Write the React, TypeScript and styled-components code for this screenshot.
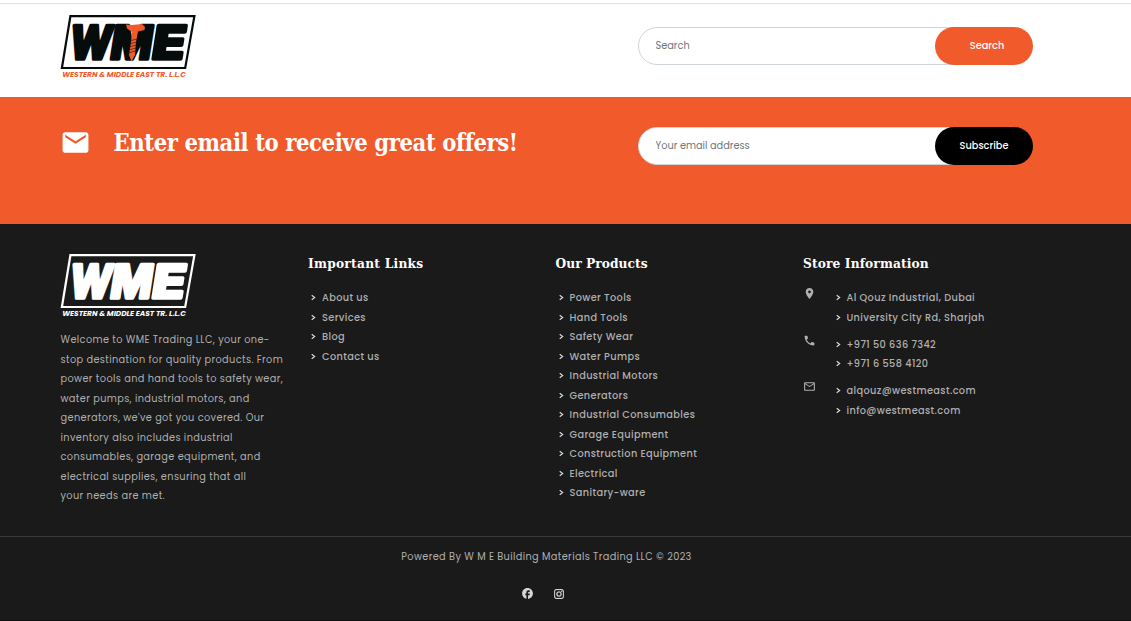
import React from "react";
import styled, { createGlobalStyle } from "styled-components";
import { MdEmail, MdLocationOn, MdPhone, MdMailOutline, MdFacebook } from "react-icons/md";
import { BsInstagram } from "react-icons/bs";

const GlobalStyle = createGlobalStyle`
  * { box-sizing: border-box; }
  body {
    margin: 0;
    background: #1a1a1a;
    font-family: Poppins, Inter, sans-serif;
    font-size: 9.75px;
  }
`;

const slab = `"Roboto Slab", "DejaVu Serif Condensed", "DejaVu Serif", serif`;

const Page = styled.div`
  width: 100%;
  height: 621px;
  overflow: hidden;
  display: flex;
  flex-direction: column;
`;

const Header = styled.header`
  height: 97px;
  background: #fff;
  display: flex;
  flex-direction: column;
  &::before {
    content: "";
    flex: none;
    height: 1px;
    margin-top: 3px;
    background: #dfdfdf;
  }
`;

const HeaderRow = styled.div`
  display: flex;
  align-items: flex-start;
  justify-content: space-between;
  padding: 10px 98px 0 60px;
`;

const FormBox = styled.form<{ $top?: number }>`
  display: flex;
  width: 395px;
  height: 38px;
  margin-top: ${(p) => p.$top ?? 0}px;
`;

const Field = styled.input`
  flex: 1;
  min-width: 0;
  margin-right: -40px;
  padding: 0 16.5px;
  border: 1px solid #ced4da;
  border-radius: 19px;
  background: #fff;
  outline: none;
  font: 9.75px Poppins, Inter, sans-serif;
  &::placeholder { color: #6c757d; opacity: 1; }
`;

const Submit = styled.button<{ $bg: string; $shift?: number }>`
  position: relative;
  width: 98px;
  padding: 0 0 0 ${(p) => p.$shift ?? 0}px;
  border: 0;
  border-radius: 19px;
  background: ${(p) => p.$bg};
  color: #fff;
  font: 500 9.75px Poppins, Inter, sans-serif;
`;

const Offer = styled.section`
  height: 127px;
  background: #f15a2b;
  color: #fff;
  display: flex;
  align-items: flex-start;
  justify-content: space-between;
  padding: 30px 98px 0 60px;
`;

const OfferTitle = styled.h2`
  display: flex;
  align-items: center;
  gap: 22.5px;
  margin: 0;
  height: 31px;
  font: 700 23.6px/31px ${slab};
  letter-spacing: -0.42px;
  white-space: nowrap;
  svg { flex: none; }
  span { padding-top: 2px; }
`;

const Columns = styled.footer`
  height: 313px;
  background: #1a1a1a;
  border-bottom: 1px solid #3a3a3a;
  display: grid;
  grid-template-columns: repeat(4, 247.5px);
  padding: 29px 0 0 60.5px;
`;

const Column = styled.div`
  display: flex;
  flex-direction: column;
  & > svg { margin-left: -0.5px; }
`;

const About = styled.p`
  margin: 11px 0 0;
  color: #b0b0b0;
  line-height: 19.5px;
  letter-spacing: 0.375px;
  white-space: nowrap;
`;

const Heading = styled.h3<{ $spacing?: number }>`
  margin: 0 0 15.5px;
  color: #fff;
  font: 700 13.6px/20px ${slab};
  letter-spacing: ${(p) => p.$spacing ?? 0.12}px;
  white-space: nowrap;
`;

const List = styled.ul`
  list-style: none;
  margin: 0;
  padding: 0;
`;

const Item = styled.li`
  display: flex;
  align-items: center;
  gap: 6px;
  height: 19.5px;
  padding-left: 3px;
  color: #b0b0b0;
  font-weight: 500;
  letter-spacing: 0.375px;
  white-space: nowrap;
  svg { flex: none; margin-bottom: 1px; }
`;

const Contact = styled.div`
  display: flex;
  align-items: flex-start;
  margin-bottom: 7.5px;
  color: #b0b0b0;
`;

const ContactIcon = styled.span`
  width: 29.5px;
  margin-top: -1.5px;
  display: flex;
`;

const Bottom = styled.div`
  flex: 1;
  background: #1a1a1a;
  color: #b0b0b0;
  display: flex;
  flex-direction: column;
  align-items: center;
  padding: 10px 38px 0 0;
  letter-spacing: 0.375px;
  line-height: 20px;
  border-bottom: 1px solid #101010;
`;

const Socials = styled.div`
  display: flex;
  align-items: center;
  gap: 19.5px;
  margin-top: 20px;
  padding-right: 8.5px;
  color: #d6d6d6;
  svg + svg { stroke: currentColor; stroke-width: 0.5; }
`;

const Chevron = () => (
  <svg width="5" height="7" viewBox="0 0 5 7" fill="none" stroke="#e0e0e0" strokeWidth="1.1">
    <path d="M.7 1.200 3.700 3.500.7 5.800" />
  </svg>
);

const Logo = ({ ink, tag, screw }: { ink: string; tag: string; screw?: boolean }) => (
  <svg width="137" height="66" viewBox="0 0 137 66">
    <path d="M10.400 2.200H134.400L125.200 54H1.900Z" fill="none" stroke={ink} strokeWidth="2.200" />
    <g
      transform="translate(10.500 46) skewX(-9)"
      fill={ink}
      stroke={ink}
      strokeWidth="3.4"
      strokeLinejoin="round"
      fontFamily="Inter, sans-serif"
      fontWeight="800"
      fontSize="46"
    >
      <text x="-3" y="-1" textLength="42" lengthAdjust="spacingAndGlyphs">W</text>
      <text x="38" y="-1" textLength="41.500" lengthAdjust="spacingAndGlyphs">M</text>
      <text x="79.500" y="-1" textLength="33" lengthAdjust="spacingAndGlyphs">E</text>
    </g>
    {screw && (
      <g fill="#f15a2b">
        <path d="M66 10.500 72 11 77 10.500 82 10 85 13 84.500 16 78 17.500 76 28 75 41 71.500 47.500 69 41 71 28 72 18 67 14.500Z" />
        <path d="M69 27l8-2M69 30l8-2M68.500 33l8-2M68.500 36l7.500-2M68 39l7.500-2" stroke="#111" strokeWidth=".6" />
      </g>
    )}
    <text
      x="2.300"
      y="62.500"
      textLength="123.500"
      lengthAdjust="spacingAndGlyphs"
      fill={tag}
      fontFamily="Poppins, Inter, sans-serif"
      fontWeight="700"
      fontStyle="italic"
      fontSize="7.400"
    >
      WESTERN &amp; MIDDLE EAST TR. L.L.C
    </text>
  </svg>
);

const Links = ({ items }: { items: string[] }) => (
  <List>
    {items.map((t) => (
      <Item key={t}>
        <Chevron />
        {t}
      </Item>
    ))}
  </List>
);

const products = [
  "Power Tools", "Hand Tools", "Safety Wear", "Water Pumps", "Industrial Motors", "Generators",
  "Industrial Consumables", "Garage Equipment", "Construction Equipment", "Electrical", "Sanitary-ware",
];

const about = [
  "Welcome to WME Trading LLC, your one-",
  "stop destination for quality products. From",
  "power tools and hand tools to safety wear,",
  "water pumps, industrial motors, and",
  "generators, we've got you covered. Our",
  "inventory also includes industrial",
  "consumables, garage equipment, and",
  "electrical supplies, ensuring that all",
  "your needs are met.",
];

export default function App() {
  return (
    <Page>
      <GlobalStyle />
      <Header>
        <HeaderRow>
          <Logo ink="#060b0b" tag="#f15a2b" screw />
          <FormBox $top={13}>
            <Field placeholder="Search" />
            <Submit type="button" $bg="#f15a2b" $shift={6}>Search</Submit>
          </FormBox>
        </HeaderRow>
      </Header>
      <Offer>
        <OfferTitle>
          <MdEmail size={31} />
          <span>Enter email to receive great offers!</span>
        </OfferTitle>
        <FormBox>
          <Field placeholder="Your email address" />
          <Submit type="button" $bg="#000">Subscribe</Submit>
        </FormBox>
      </Offer>
      <Columns>
        <Column>
          <Logo ink="#fff" tag="#fff" />
          <About>
            {about.map((line) => (
              <React.Fragment key={line}>
                {line}
                <br />
              </React.Fragment>
            ))}
          </About>
        </Column>
        <Column>
          <Heading $spacing={0.25}>Important Links</Heading>
          <Links items={["About us", "Services", "Blog", "Contact us"]} />
        </Column>
        <Column>
          <Heading $spacing={0.05}>Our Products</Heading>
          <Links items={products} />
        </Column>
        <Column>
          <Heading>Store Information</Heading>
          <Contact>
            <ContactIcon><MdLocationOn size={13} /></ContactIcon>
            <Links items={["Al Qouz Industrial, Dubai", "University City Rd, Sharjah"]} />
          </Contact>
          <Contact>
            <ContactIcon><MdPhone size={13} /></ContactIcon>
            <Links items={["+971 50 636 7342", "+971 6 558 4120"]} />
          </Contact>
          <Contact>
            <ContactIcon><MdMailOutline size={13} /></ContactIcon>
            <Links items={["alqouz@westmeast.com", "info@westmeast.com"]} />
          </Contact>
        </Column>
      </Columns>
      <Bottom>
        <span>Powered By W M E Building Materials Trading LLC © 2023</span>
        <Socials>
          <MdFacebook size={13} />
          <BsInstagram size={10} />
        </Socials>
      </Bottom>
    </Page>
  );
}
